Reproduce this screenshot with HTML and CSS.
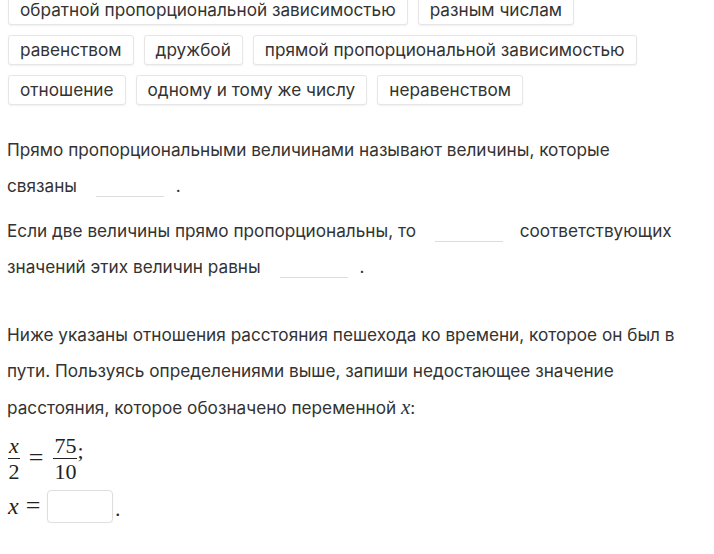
FILE: index.html
```html
<!DOCTYPE html>
<html lang="ru">
<head>
<meta charset="utf-8">
<link rel="stylesheet" href="styles.css">
</head>
<body>
<div class="page">
  <div class="chips">
    <span class="chip">обратной пропорциональной зависимостью</span>
    <span class="chip">разным числам</span>
    <span class="chip">равенством</span>
    <span class="chip">дружбой</span>
    <span class="chip">прямой пропорциональной зависимостью</span>
    <span class="chip">отношение</span>
    <span class="chip">одному и тому же числу</span>
    <span class="chip">неравенством</span>
  </div>
  <p class="text first">Прямо пропорциональными величинами называют величины, которые связаны <span class="blank"></span>.</p>
  <p class="text">Если две величины прямо пропорциональны, то <span class="blank"></span> соответствующих значений этих величин равны <span class="blank"></span>.</p>
  <p class="text task">Ниже указаны отношения расстояния пешехода ко времени, которое он был в пути. Пользуясь определениями выше, запиши недостающее значение расстояния, которое обозначено переменной <span class="mi">x</span>:</p>
  <div class="math">
    <span class="frac"><span class="num mi">x</span><span class="den">2</span></span>
    <span class="eq">=</span>
    <span class="frac"><span class="num">75</span><span class="den">10</span></span><span class="semi">;</span>
  </div>
  <div class="answer">
    <span class="mi big">x</span><span class="eq">=</span><span class="input"></span><span class="dot">.</span>
  </div>
</div>
</body>
</html>
```
FILE: styles.css
```css
html, body {
  margin: 0;
  padding: 0;
  background: #fff;
}
.page {
  margin-top: -5px;
  padding: 0 8px 0 7px;
  width: 676px;
  font-family: Inter, "Noto Sans", sans-serif;
  color: #333;
  font-size: 17.2px;
}
.chips {
  display: flex;
  flex-wrap: wrap;
  gap: 10px 9px;
}
.chip {
  display: inline-block;
  height: 28px;
  line-height: 28px;
  padding: 0 11px;
  border: 1px solid #e6e6e6;
  border-radius: 3px;
  box-shadow: 0 1px 2px rgba(0,0,0,0.06);
  background: #fff;
  white-space: nowrap;
  margin-left: 1px;
}
.text {
  margin: 0;
  line-height: 36px;
}
.text.first {
  margin-top: 27px;
}
.text + .text {
  margin-top: 9px;
}
.text.task {
  margin-top: 32px;
}
.blank {
  display: inline-block;
  width: 68px;
  height: 1px;
  border-bottom: 1px solid #dcdcdc;
  margin: 0 12px 0 14px;
  vertical-align: -5px;
}
.mi {
  font-family: "Liberation Serif", "DejaVu Serif", serif;
  font-style: italic;
  font-size: 21px;
}
.math {
  display: flex;
  align-items: center;
  height: 56px;
  margin-top: 4px;
  font-family: "Liberation Serif", "DejaVu Serif", serif;
  font-size: 22px;
  color: #222;
  padding-left: 1px;
}
.frac {
  display: inline-flex;
  flex-direction: column;
  align-items: center;
  line-height: 23px;
}
.frac .num {
  border-bottom: 1px solid #222;
  padding: 0 1px 1px;
  font-size: 22px;
}
.frac .den {
  padding-top: 1px;
}
.eq {
  margin: 0 8px;
  font-family: "Liberation Serif", "DejaVu Serif", serif;
  font-size: 26px;
  line-height: 1;
}
.math .eq {
  margin: 0 10px 0 9px;
}
.semi {
  align-self: flex-start;
  margin-top: 8px;
}
.answer {
  display: flex;
  align-items: center;
  height: 34px;
  margin-top: 3px;
  color: #222;
}
.mi.big {
  font-size: 24px;
  padding-left: 1px;
}
.answer .eq {
  margin: 0 7px 0 7px;
}
.input {
  width: 64px;
  height: 31px;
  border: 1px solid #dedede;
  border-radius: 4px;
  box-shadow: 0 1px 2px rgba(0,0,0,0.06);
}
.dot {
  font-family: "Liberation Serif", serif;
  font-size: 20px;
  margin-left: 2px;
  align-self: flex-end;
  margin-bottom: 2px;
}
```
